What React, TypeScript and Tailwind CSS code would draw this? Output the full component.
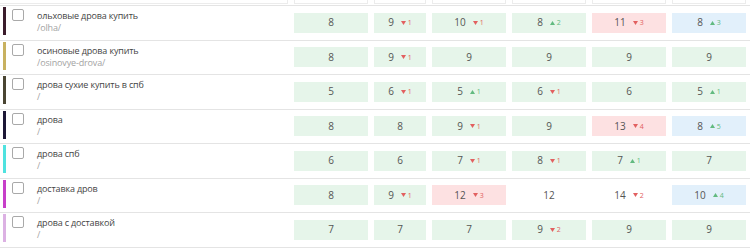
type Tone = "g" | "r" | "b" | "n";
type Cell = { v: number; d?: number; t: Tone };

type Row = {
  name: string;
  url: string;
  bar: string;
  cells: Cell[];
};

const rows: Row[] = [
  {
    name: "ольховые дрова купить",
    url: "/olha/",
    bar: "bg-[#3b1c2c]",
    cells: [
      { v: 8, t: "g" },
      { v: 9, d: -1, t: "g" },
      { v: 10, d: -1, t: "g" },
      { v: 8, d: 2, t: "g" },
      { v: 11, d: -3, t: "r" },
      { v: 8, d: 3, t: "b" },
    ],
  },
  {
    name: "осиновые дрова купить",
    url: "/osinovye-drova/",
    bar: "bg-[#c8b160]",
    cells: [
      { v: 8, t: "g" },
      { v: 9, d: -1, t: "g" },
      { v: 9, t: "g" },
      { v: 9, t: "g" },
      { v: 9, t: "g" },
      { v: 9, t: "g" },
    ],
  },
  {
    name: "дрова сухие купить в спб",
    url: "/",
    bar: "bg-[#4a4532]",
    cells: [
      { v: 5, t: "g" },
      { v: 6, d: -1, t: "g" },
      { v: 5, d: 1, t: "g" },
      { v: 6, d: -1, t: "g" },
      { v: 6, t: "g" },
      { v: 5, d: 1, t: "g" },
    ],
  },
  {
    name: "дрова",
    url: "/",
    bar: "bg-[#1d1736]",
    cells: [
      { v: 8, t: "g" },
      { v: 8, t: "g" },
      { v: 9, d: -1, t: "g" },
      { v: 9, t: "g" },
      { v: 13, d: -4, t: "r" },
      { v: 8, d: 5, t: "b" },
    ],
  },
  {
    name: "дрова спб",
    url: "/",
    bar: "bg-[#4fe2df]",
    cells: [
      { v: 6, t: "g" },
      { v: 6, t: "g" },
      { v: 7, d: -1, t: "g" },
      { v: 8, d: -1, t: "g" },
      { v: 7, d: 1, t: "g" },
      { v: 7, t: "g" },
    ],
  },
  {
    name: "доставка дров",
    url: "/",
    bar: "bg-[#c73fc9]",
    cells: [
      { v: 8, t: "g" },
      { v: 9, d: -1, t: "g" },
      { v: 12, d: -3, t: "r" },
      { v: 12, t: "n" },
      { v: 14, d: -2, t: "n" },
      { v: 10, d: 4, t: "b" },
    ],
  },
  {
    name: "дрова с доставкой",
    url: "/",
    bar: "bg-[#dcb1e3]",
    cells: [
      { v: 7, t: "g" },
      { v: 7, t: "g" },
      { v: 7, t: "g" },
      { v: 9, d: -2, t: "g" },
      { v: 9, t: "g" },
      { v: 9, t: "g" },
    ],
  },
];

const colWidths = ["w-[80px]", "w-[58px]", "w-[80px]", "w-[80px]", "w-[80px]", "w-[80px]"];

const toneBg: Record<Tone, string> = {
  g: "bg-[#e6f5ea]",
  r: "bg-[#fde1e2]",
  b: "bg-[#e2f0fb]",
  n: "bg-white",
};

function Delta({ d }: { d: number }) {
  const up = d > 0;
  return (
    <span
      className={`ml-[7px] flex items-center gap-[2px] text-[7px] leading-none ${
        up ? "text-[#62ba80]" : "text-[#e26060]"
      }`}
    >
      <svg width="5" height="4" viewBox="0 0 5 4" className="fill-current">
        {up ? <path d="M2.5 0 L5 4 L0 4 Z" /> : <path d="M0 0 L5 0 L2.5 4 Z" />}
      </svg>
      {Math.abs(d)}
    </span>
  );
}

function ValueCell({ cell, width }: { cell: Cell; width: string }) {
  return (
    <div className={`${width} shrink-0 px-[3px]`}>
      <div
        className={`flex h-[20px] items-center justify-center ${toneBg[cell.t]} text-[10px] text-[#555]`}
      >
        <span>{cell.v}</span>
        {cell.d !== undefined && <Delta d={cell.d} />}
      </div>
    </div>
  );
}

export default function App() {
  return (
    <div className="w-[750px] h-[248px] overflow-hidden bg-white font-['Open_Sans',sans-serif]">
      {/* tail of the header row above */}
      <div className="flex h-[5px]">
        <div className="w-[291px] shrink-0 pr-[3px]">
          <div className="h-[4px] border-b border-r border-[#ececec]" />
        </div>
        {colWidths.map((w, i) => (
          <div key={i} className={`${w} shrink-0 px-[3px]`}>
            <div className="h-[4px] border-x border-b border-[#ececec]" />
          </div>
        ))}
      </div>

      {rows.map((row) => (
        <div key={row.name} className="flex h-[34.5px] border-t border-[#e4e4e4]">
          <div className="flex w-[291px] shrink-0 items-start">
            <div className={`ml-[3px] mt-[1px] h-[28px] w-[3px] ${row.bar}`} />
            <div className="ml-[6px] mt-[3px] h-[12px] w-[12px] rounded-[2px] border border-[#a9a9a9] bg-white" />
            <div className="ml-[13px] mt-[4px] text-[9px] leading-[12px] tracking-[-0.15px]">
              <div className="text-[#444]">{row.name}</div>
              <div className="text-[#a3a3a3]">{row.url}</div>
            </div>
          </div>
          <div className="flex items-center">
            {row.cells.map((c, i) => (
              <ValueCell key={i} cell={c} width={colWidths[i]} />
            ))}
          </div>
        </div>
      ))}
      <div className="border-t border-[#e4e4e4]" />
    </div>
  );
}
